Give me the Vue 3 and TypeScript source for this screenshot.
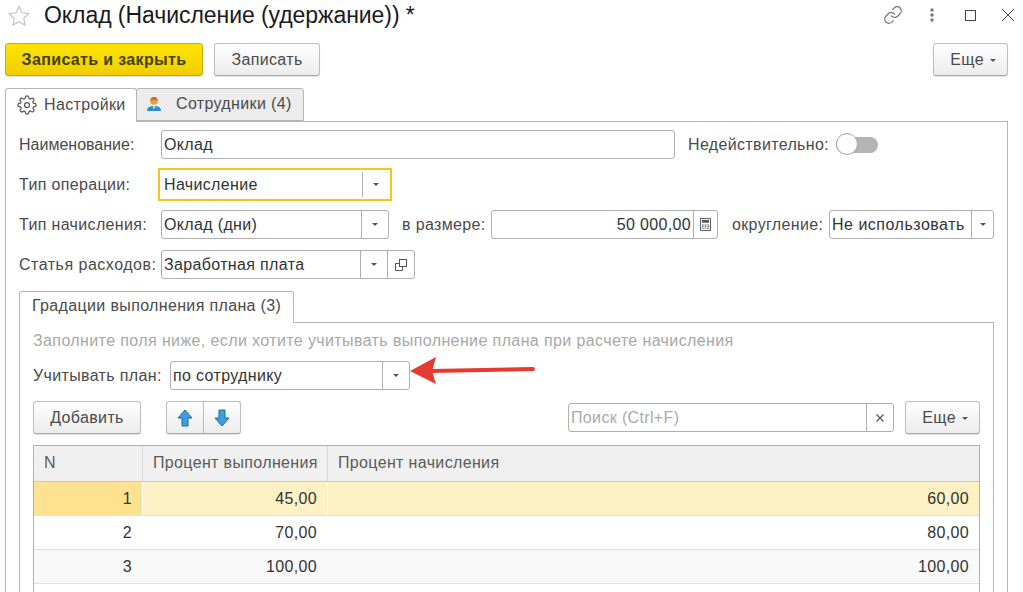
<script setup lang="ts">
interface GradeRow {
  n: number
  done: string
  accrual: string
}

const gradeRows: GradeRow[] = [
  { n: 1, done: '45,00', accrual: '60,00' },
  { n: 2, done: '70,00', accrual: '80,00' },
  { n: 3, done: '100,00', accrual: '100,00' },
]
</script>

<template>
  <div class="page">
    <!-- Title bar -->
    <header class="title-bar">
      <svg class="star" viewBox="0 0 22 21" width="22" height="21">
        <path d="M11 1.5l2.9 6.3 6.8.8-5 4.7 1.3 6.8-6-3.4-6 3.4 1.3-6.8-5-4.7 6.8-.8z" fill="none" stroke="#c4c4c4" stroke-width="1.2" />
      </svg>
      <h1 class="title">Оклад (Начисление (удержание)) *</h1>
      <div class="window-tools">
        <svg class="tool-link" viewBox="0 0 24 24" width="20" height="20" fill="none" stroke="#777" stroke-width="1.5" stroke-linecap="round">
          <path d="M10 13a5 5 0 0 0 7.54.54l3-3a5 5 0 0 0-7.07-7.07l-1.72 1.71" />
          <path d="M14 11a5 5 0 0 0-7.54-.54l-3 3a5 5 0 0 0 7.07 7.07l1.71-1.71" />
        </svg>
        <svg class="tool-dots" viewBox="0 0 4 14" width="4" height="14" fill="#777">
          <circle cx="2" cy="2" r="1.7" />
          <circle cx="2" cy="7" r="1.7" />
          <circle cx="2" cy="12" r="1.7" />
        </svg>
        <span class="tool-square"></span>
        <svg class="tool-close" viewBox="0 0 12 12" width="12" height="12" stroke="#444" stroke-width="1">
          <path d="M0 0l12 12M12 0L0 12" />
        </svg>
      </div>
    </header>

    <!-- Command bar -->
    <div class="command-bar">
      <button class="btn btn-primary">Записать и закрыть</button>
      <button class="btn btn-save">Записать</button>
      <button class="btn btn-more">Еще <i class="caret"></i></button>
    </div>

    <!-- Page tabs -->
    <div class="tabs">
      <div class="tab tab-active tab-settings">
        <svg viewBox="0 0 24 24" width="20" height="20" fill="none" stroke="#555" stroke-width="1.5">
          <circle cx="12" cy="12" r="3" />
          <path d="M19.4 15a1.65 1.65 0 0 0 .33 1.82l.06.06a2 2 0 1 1-2.83 2.83l-.06-.06a1.65 1.65 0 0 0-2.82 1.17V21a2 2 0 0 1-4 0v-.09A1.65 1.65 0 0 0 7.26 19.74l-.06.06a2 2 0 1 1-2.83-2.83l.06-.06A1.65 1.65 0 0 0 3.26 14H3a2 2 0 0 1 0-4h.09A1.65 1.65 0 0 0 4.26 7.2l-.06-.06a2 2 0 1 1 2.83-2.83l.06.06A1.65 1.65 0 0 0 10 3.26V3a2 2 0 0 1 4 0v.09a1.65 1.65 0 0 0 2.8 1.17l.06-.06a2 2 0 1 1 2.83 2.83l-.06.06A1.65 1.65 0 0 0 20.74 10H21a2 2 0 0 1 0 4h-.09a1.65 1.65 0 0 0-1.51 1z" />
        </svg>
        Настройки
      </div>
      <div class="tab tab-staff">
        <svg viewBox="0 0 14 16" width="14" height="16">
          <path d="M0 15c0-4 3-5 7-5s7 1 7 5z" fill="#2f8fc4" />
          <path d="M5.5 10.5h3L7 13z" fill="#fff" />
          <circle cx="7" cy="5" r="3.8" fill="#e2a04a" />
          <path d="M3.2 4.6C3.4 2 5 1 7 1s3.600 1 3.800 3.600C9 3.400 5 3.400 3.200 4.600z" fill="#b5702a" />
        </svg>
        Сотрудники (4)
      </div>
    </div>

    <section class="panel">
      <div class="form-row">
        <label class="label label-tight">Наименование:</label>
        <div class="field field-name"><span class="value">Оклад</span></div>
        <label class="label label-inline label-invalid">Недействительно:</label>
        <div class="switch"><span class="knob"></span></div>
      </div>

      <div class="form-row">
        <label class="label">Тип операции:</label>
        <div class="field field-type focused">
          <span class="value">Начисление</span>
          <span class="drop"><i class="caret"></i></span>
        </div>
      </div>

      <div class="form-row">
        <label class="label">Тип начисления:</label>
        <div class="field field-type">
          <span class="value">Оклад (дни)</span>
          <span class="drop"><i class="caret"></i></span>
        </div>
        <label class="label label-inline label-size">в размере:</label>
        <div class="field field-size">
          <span class="value value-right">50 000,00</span>
          <span class="drop drop-calc">
            <svg viewBox="0 0 12 14" width="11" height="13">
              <rect x="0.5" y="0.5" width="11" height="13" fill="none" stroke="#555" />
              <rect x="2" y="2" width="8" height="3" fill="#555" />
              <path d="M2 7h2v1H2zM5 7h2v1H5zM8 7h2v1H8zM2 9h2v1H2zM5 9h2v1H5zM8 9h2v1H8zM2 11h2v1H2zM5 11h2v1H5zM8 11h2v1H8z" fill="#555" />
            </svg>
          </span>
        </div>
        <label class="label label-round">округление:</label>
        <div class="field field-round">
          <span class="value">Не использовать</span>
          <span class="drop drop-round"><i class="caret"></i></span>
        </div>
      </div>

      <div class="form-row">
        <label class="label label-wide">Статья расходов:</label>
        <div class="field field-expense">
          <span class="value">Заработная плата</span>
          <span class="drop"><i class="caret"></i></span>
          <span class="drop drop-copy">
            <svg viewBox="0 0 12 12" width="12" height="12" fill="none" stroke="#555">
              <rect x="4.500" y="0.500" width="7" height="7" />
              <path d="M4.500 4.500H0.500v7h7V7.500" />
            </svg>
          </span>
        </div>
      </div>

      <!-- Nested tab -->
      <div class="inner-tabs">
        <div class="inner-tab">Градации выполнения плана (3)</div>
      </div>
      <div class="inner-panel">
        <p class="hint">Заполните поля ниже, если хотите учитывать выполнение плана при расчете начисления</p>

        <div class="form-row plan-row">
          <label class="label label-plan">Учитывать план:</label>
          <div class="field field-plan">
            <span class="value">по сотруднику</span>
            <span class="drop drop-plan"><i class="caret"></i></span>
          </div>
          <svg class="pointer" viewBox="0 0 126 30" width="126" height="30">
            <path d="M22 15L124 13" stroke="#e53a30" stroke-width="4" stroke-linecap="round" fill="none" />
            <path d="M1 15L27 1l-4 14 4 13z" fill="#e53a30" />
          </svg>
        </div>

        <div class="table-bar">
          <button class="btn btn-add">Добавить</button>
          <div class="btn-group">
            <button class="btn btn-arrow">
              <svg viewBox="0 0 16 18" width="16" height="18">
                <path d="M8 1l7 8h-4v8H5V9H1z" fill="#3c9fe0" stroke="#1f6a9e" stroke-linejoin="round" />
              </svg>
            </button>
            <button class="btn btn-arrow">
              <svg viewBox="0 0 16 18" width="16" height="18">
                <path d="M8 17l7-8h-4V1H5v8H1z" fill="#3c9fe0" stroke="#1f6a9e" stroke-linejoin="round" />
              </svg>
            </button>
          </div>
          <div class="field field-search">
            <span class="value placeholder">Поиск (Ctrl+F)</span>
            <span class="drop drop-clear">
              <svg viewBox="0 0 8 8" width="8" height="8" stroke="#555" stroke-width="1.200">
                <path d="M0.500 0.500l7 7M7.500 0.500l-7 7" />
              </svg>
            </span>
          </div>
          <button class="btn btn-more btn-more-table">Еще <i class="caret"></i></button>
        </div>

        <div class="grid">
          <div class="grid-row grid-head">
            <div class="cell">N</div>
            <div class="cell">Процент выполнения</div>
            <div class="cell">Процент начисления</div>
          </div>
          <div
            v-for="(row, i) in gradeRows"
            :key="row.n"
            class="grid-row grid-body"
            :class="{ current: i === 0, striped: i === 2 }"
          >
            <div class="cell num">{{ row.n }}</div>
            <div class="cell num">{{ row.done }}</div>
            <div class="cell num">{{ row.accrual }}</div>
          </div>
          <div class="grid-row grid-body"></div>
        </div>
      </div>
    </section>
  </div>
</template>

<style>
html,
body {
  margin: 0;
  overflow: hidden;
  background: #fff;
}
</style>

<style scoped>
.page {
  height: 592px;
  overflow: hidden;
  background: #fff;
  color: #4a4a4a;
  font-family: 'Liberation Sans', Arial, sans-serif;
  font-size: 16px;
  letter-spacing: 0.35px;
}

.title-bar {
  display: flex;
  align-items: center;
  height: 43px;
  padding: 0 9px 13px 8px;
  box-sizing: border-box;
}

.title {
  margin: 0 0 0 14px;
  color: #1a1a1a;
  font-size: 23px;
  font-weight: 400;
  letter-spacing: -0.06px;
}

.window-tools {
  display: flex;
  align-items: center;
  margin-left: auto;
}

.tool-dots {
  margin-left: 27px;
}

.tool-square {
  width: 9px;
  height: 9px;
  margin-left: 31px;
  border: 1px solid #444;
}

.tool-close {
  margin-left: 26px;
}

.command-bar {
  display: flex;
  gap: 11px;
  height: 33px;
  padding: 0 15px 0 5px;
}

.btn {
  height: 33px;
  padding: 0;
  box-sizing: border-box;
  border: 1px solid #bdbdbd;
  border-bottom-color: #a8a8a8;
  border-radius: 3px;
  background: linear-gradient(#fff, #ececec);
  box-shadow: 0 1px 1px rgba(0, 0, 0, 0.12);
  color: #4a4a4a;
  font: inherit;
  letter-spacing: inherit;
}

.btn-primary {
  width: 198px;
  border-color: #c8aa00;
  background: linear-gradient(#ffe500, #efcd00);
  color: #44400a;
  font-weight: 700;
}

.btn-save {
  width: 106px;
}

.btn-more {
  width: 75px;
  margin-left: auto;
  padding-left: 5px;
}

.caret {
  display: inline-block;
  margin-left: 1px;
  border-top: 3px solid #555;
  border-right: 3px solid transparent;
  border-left: 3px solid transparent;
  vertical-align: middle;
}

.tabs {
  display: flex;
  height: 33px;
  margin-top: 12px;
  padding-left: 5px;
}

.tab {
  display: flex;
  align-items: center;
  padding-bottom: 2px;
  box-sizing: border-box;
  border: 1px solid #b5b5b5;
  border-radius: 3px 3px 0 0;
}

.tab-settings {
  gap: 7px;
  width: 132px;
  padding-left: 11px;
}

.tab-active {
  position: relative;
  z-index: 1;
  height: 34px;
  border-bottom: 0;
  background: #fff;
}

.tab-staff {
  gap: 15px;
  width: 168px;
  margin-left: -1px;
  padding-left: 10px;
  background: #ececec;
}

.panel {
  height: 480px;
  margin: 0 15px 0 5px;
  padding: 8px 13px 0;
  box-sizing: border-box;
  border: 1px solid #b5b5b5;
}

.form-row {
  display: flex;
  align-items: center;
  height: 29px;
  margin-bottom: 11px;
}

.label {
  flex: none;
  width: 142px;
  white-space: nowrap;
}

.label-tight {
  letter-spacing: 0;
}

.label-wide {
  letter-spacing: 0.5px;
}

.label-inline {
  margin-left: 13px;
  margin-right: 7px;
}

.label-invalid {
  width: 141px;
}

.label-size {
  width: 82px;
}

.label-round {
  width: 90px;
  margin-left: 14px;
  margin-right: 7px;
}

.field {
  display: flex;
  flex: none;
  height: 29px;
  box-sizing: border-box;
  border: 1px solid #aeaeae;
  border-radius: 3px;
  background: #fff;
  color: #333;
}

.value {
  flex: 1;
  min-width: 0;
  padding-left: 2px;
  line-height: 27px;
  white-space: nowrap;
}

.value-right {
  padding-right: 2px;
  text-align: right;
}

.placeholder {
  color: #aaa;
}

.drop {
  display: flex;
  flex: none;
  align-items: center;
  justify-content: center;
  width: 26px;
  border-left: 1px solid #aeaeae;
}

.drop .caret {
  margin-left: 0;
}

.field-name {
  width: 514px;
}

.field-type {
  width: 228px;
}

.field-type.focused {
  width: 234px;
  height: 33px;
  margin: -2px -3px;
  padding: 2px 1px;
  border: 2px solid #f5c71a;
  border-radius: 0;
}

.focused .value {
  line-height: 25px;
  padding-left: 3px;
}

.field-size {
  width: 227px;
}

.drop-calc {
  width: 23px;
}

.field-round {
  width: 165px;
  letter-spacing: 0.5px;
}

.drop-round {
  width: 21px;
}

.field-expense {
  width: 254px;
}

.switch {
  position: relative;
  width: 42px;
  height: 16px;
  border-radius: 8px;
  background: #b4b4b4;
}

.knob {
  position: absolute;
  top: -4px;
  left: 0;
  width: 22px;
  height: 22px;
  box-sizing: border-box;
  border: 1px solid #a5a5a5;
  border-radius: 50%;
  background: #fff;
}

.inner-tabs {
  display: flex;
  margin-top: 12px;
}

.inner-tab {
  position: relative;
  z-index: 1;
  width: 275px;
  height: 32px;
  padding-left: 12px;
  box-sizing: border-box;
  border: 1px solid #b5b5b5;
  border-bottom: 0;
  border-radius: 3px 3px 0 0;
  background: #fff;
  line-height: 27px;
}

.inner-panel {
  height: 300px;
  margin-top: -1px;
  padding: 0 13px;
  border: 1px solid #b5b5b5;
  border-bottom: 0;
}

.hint {
  height: 38px;
  margin: 0;
  color: #a8a8a8;
  letter-spacing: 0.39px;
  line-height: 35px;
}

.plan-row {
  position: relative;
}

.label-plan {
  width: 137px;
}

.field-plan {
  width: 240px;
}

.drop-plan {
  width: 26px;
}

.pointer {
  position: absolute;
  top: -5px;
  left: 376px;
}

.table-bar {
  display: flex;
  align-items: center;
  height: 33px;
}

.btn-add {
  width: 108px;
}

.btn-group {
  display: flex;
  margin-left: 25px;
}

.btn-arrow {
  display: flex;
  align-items: center;
  justify-content: center;
  width: 38px;
}

.btn-arrow:first-child {
  border-radius: 3px 0 0 3px;
}

.btn-arrow:last-child {
  margin-left: -1px;
  border-radius: 0 3px 3px 0;
}

.field-search {
  width: 326px;
  margin-left: auto;
}

.drop-clear {
  width: 26px;
}

.btn-more-table {
  flex: none;
  margin-left: 11px;
}

.grid {
  margin-top: 11px;
  border: 1px solid #aeaeae;
  border-bottom: 0;
}

.grid-row {
  display: grid;
  grid-template-columns: 109px 185px 1fr;
}

.grid-head {
  height: 35px;
  border-bottom: 1px solid #c8c8c8;
  background: #f0f0f0;
  color: #5a5a5a;
}

.grid-head .cell {
  padding: 0 10px;
  line-height: 33px;
}

.cell {
  box-sizing: border-box;
  border-right: 1px solid #d8d8d8;
  white-space: nowrap;
}

.cell:last-child {
  border-right: 0;
}

.grid-body {
  height: 34px;
  box-sizing: border-box;
  border-bottom: 1px solid #e2e2e2;
  color: #333;
}

.num {
  padding: 0 10px;
  line-height: 33px;
  text-align: right;
}

.current {
  background: #fdf1c5;
}

.current .cell {
  border-right-color: #fff;
}

.current .cell:first-child {
  background: #fee28f;
}

.striped {
  background: #f9f9f9;
}

.striped .cell,
.grid-body:not(.current) .cell {
  border-right-color: transparent;
}
</style>
